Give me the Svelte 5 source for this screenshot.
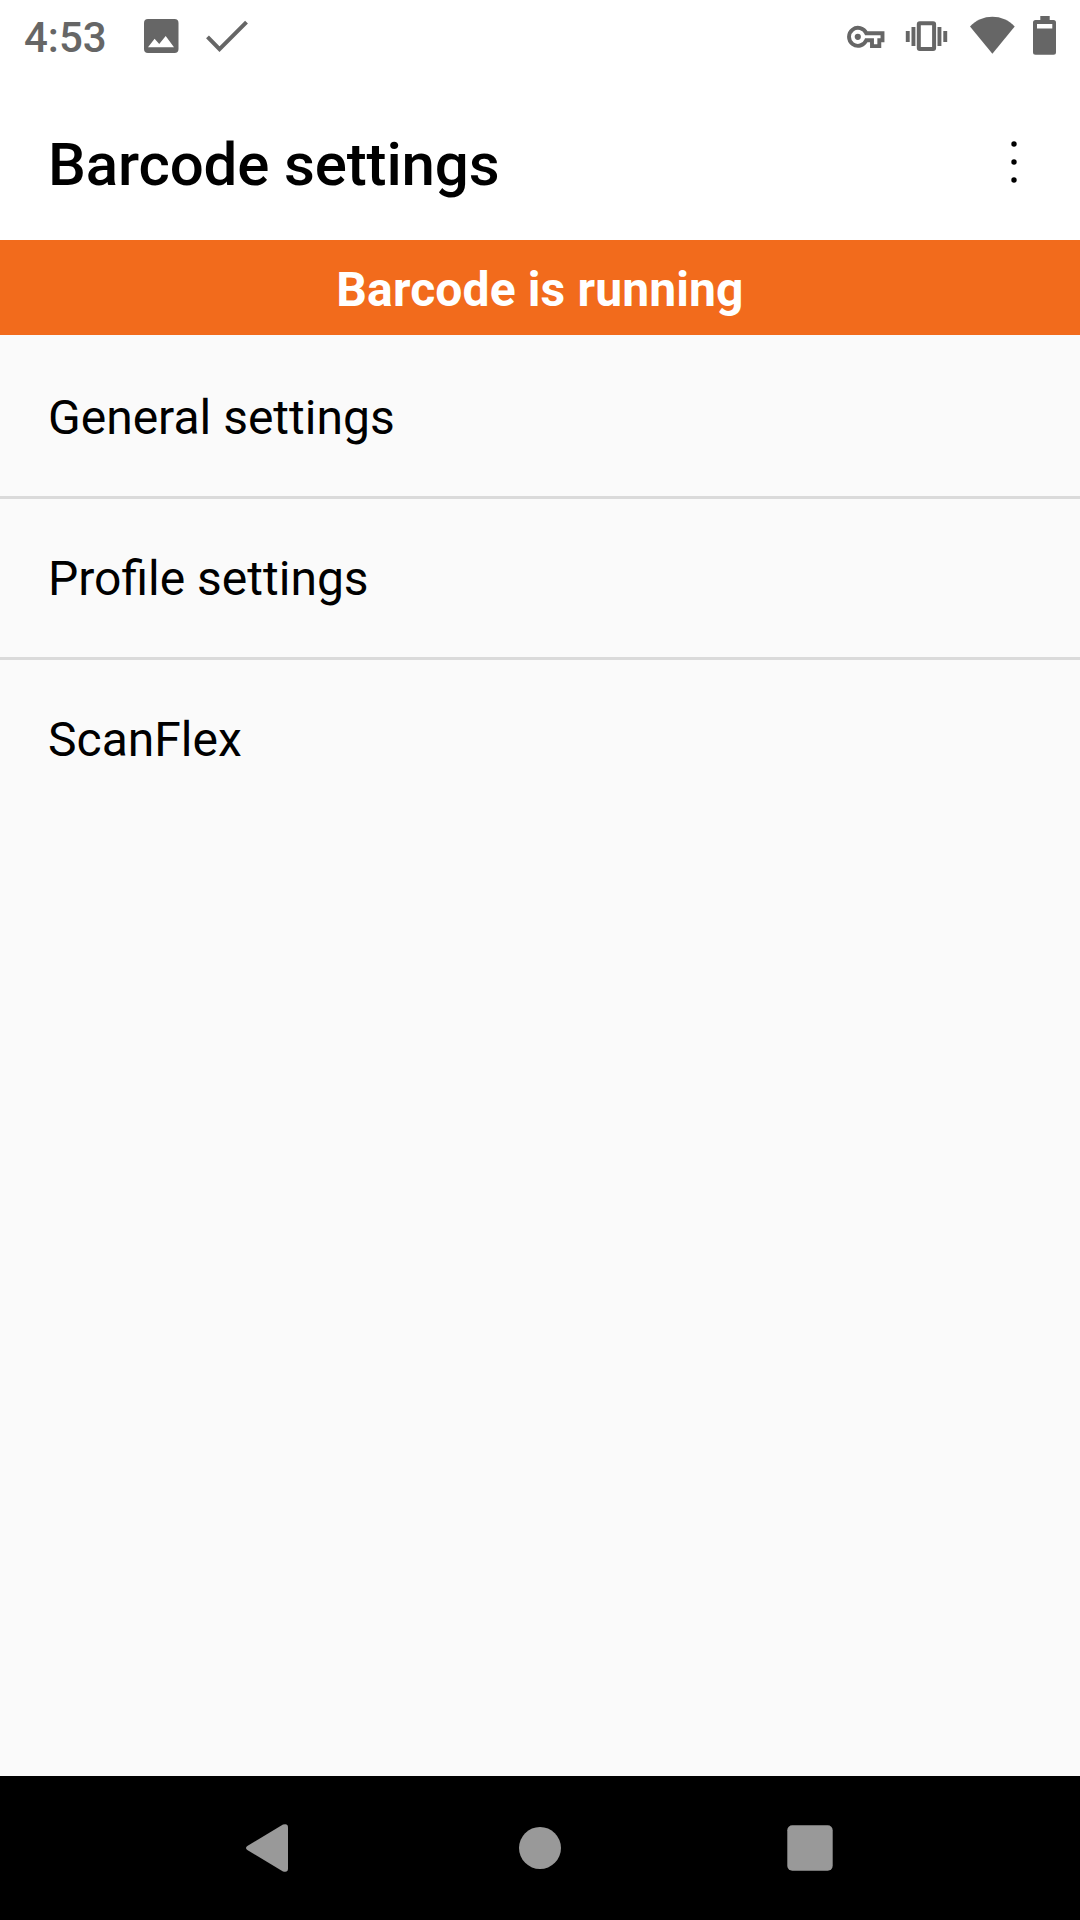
<!-- App.svelte -->
<script lang="ts">
  const title = 'Barcode settings';
  const clock = '4:53';
  const running = true;

  const items = [
    { id: 'general', label: 'General settings' },
    { id: 'profile', label: 'Profile settings' },
    { id: 'scanflex', label: 'ScanFlex' }
  ];
</script>

<div class="screen">
  <div class="status-bar">
    <span class="clock">{clock}</span>

    <svg class="picture" width="36" height="40" viewBox="0 0 36 40" fill="#666">
      <path
        fill-rule="evenodd"
        d="M4 3h26.500a4 4 0 0 1 4 4v26a4 4 0 0 1-4 4H4a4 4 0 0 1-4-4V7a4 4 0 0 1 4-4zM4 31.200h26L21.700 19.900l-6.500 8-4.600-5.200z"
      />
    </svg>
    <svg class="check" width="43" height="40" viewBox="0 0 43 40" fill="none" stroke="#666" stroke-width="4">
      <path d="M1.500 20.800L13.500 33.200L40.500 6.200" />
    </svg>

    <div class="system-icons">
      <!-- VPN key -->
      <svg width="39" height="40" viewBox="0 0 39 40" fill="none" stroke="#666" stroke-width="3.900">
        <path d="M20.300 17.300H36.500V24.300H33.300V30.100H26V24.300H20.300A9 9 0 1 1 20.300 17.300z" />
        <circle cx="11.800" cy="20.800" r="3.100" fill="#666" stroke="none" />
      </svg>
      <!-- Vibrate -->
      <svg class="vibrate" width="43" height="40" viewBox="0 0 43 40" fill="#666">
        <path d="M.8 15h3.900v11H.8zM6.500 11h3.900v19H6.500zM32.500 11h3.900v19h-3.900zM38.300 15h3.900v11h-3.900z" />
        <rect x="13.800" y="7.200" width="15.300" height="25.900" rx="1" fill="none" stroke="#666" stroke-width="4" />
      </svg>
      <!-- Wi-Fi -->
      <svg class="wifi" width="45" height="40" viewBox="0 0 45 40" fill="#666">
        <path d="M0 10.400C6 4 14 .7 22.400 .7S38.700 4 44.700 10.400L22.400 37.800z" />
      </svg>
      <!-- Battery -->
      <svg class="battery" width="24" height="40" viewBox="0 0 24 40" fill="#666">
        <path
          fill-rule="evenodd"
          d="M7.300 0h9.400v4H20.500a2.500 2.500 0 0 1 2.500 2.500V36.200a2.500 2.500 0 0 1-2.500 2.500H2.500a2.500 2.500 0 0 1-2.500-2.500V6.500A2.500 2.500 0 0 1 2.500 4H7.300zM4 8v4.600h15.300V8z"
        />
      </svg>
    </div>
  </div>

  <header class="app-bar">
    <h1>{title}</h1>
    <button class="overflow" aria-label="More options">
      <svg width="12" height="44" viewBox="0 0 12 44">
        <circle cx="6" cy="4" r="2.700" />
        <circle cx="6" cy="22" r="2.700" />
        <circle cx="6" cy="40" r="2.700" />
      </svg>
    </button>
  </header>

  {#if running}
    <div class="banner">Barcode is running</div>
  {/if}

  <ul class="settings">
    {#each items as item (item.id)}
      <li>{item.label}</li>
    {/each}
  </ul>

  <nav class="nav-bar">
    <svg class="back" width="42" height="48" viewBox="0 0 42 48">
      <path d="M1.300 21.900L37 .6Q42-1 42 3.500V44.500Q42 49 37 47.400L1.300 26.100Q-1.300 24 1.300 21.900z" />
    </svg>
    <svg class="home" width="42" height="42" viewBox="0 0 42 42">
      <circle cx="21" cy="21" r="21" />
    </svg>
    <svg class="recents" width="46" height="46" viewBox="0 0 46 46">
      <rect x=".3" y=".3" width="45.400" height="45.400" rx="5" />
    </svg>
  </nav>
</div>

<style>
  :global(body) {
    margin: 0;
  }

  .screen {
    display: flex;
    flex-direction: column;
    width: 1080px;
    height: 1920px;
    background-color: #fafafa;
    color: #000;
    font-family: Roboto, sans-serif;
    overflow: hidden;
  }

  svg {
    display: block;
    flex: none;
  }

  /* Status bar */
  .status-bar {
    display: flex;
    align-items: center;
    box-sizing: border-box;
    height: 72px;
    padding: 0 23px 0 24px;
    background-color: #fff;
  }

  .clock {
    width: 120px;
    padding-top: 3px;
    color: #666;
    font-size: 42px;
    font-weight: 500;
    line-height: 48px;
  }

  .check {
    margin-left: 26px;
  }

  .system-icons {
    display: flex;
    margin-left: auto;
  }

  .vibrate {
    margin-left: 20px;
  }

  .wifi {
    margin-left: 22px;
  }

  .battery {
    margin-left: 18px;
  }

  /* App bar */
  .app-bar {
    display: flex;
    align-items: center;
    justify-content: space-between;
    box-sizing: border-box;
    height: 168px;
    padding: 12px 60px 0 48px;
    background-color: #fff;
  }

  h1 {
    margin: 0;
    padding-top: 5px;
    font-size: 60px;
    font-weight: 500;
    letter-spacing: -0.14px;
    line-height: 70px;
  }

  .overflow {
    padding: 0;
    border: none;
    background: none;
  }

  .banner {
    box-sizing: border-box;
    height: 95px;
    padding-top: 4px;
    background-color: #f26b1c;
    color: #fff;
    font-size: 48px;
    font-weight: 700;
    letter-spacing: 0.13px;
    line-height: 91px;
    text-align: center;
  }

  /* Settings list */
  .settings {
    flex: 1;
    margin: 0;
    padding: 3px 0 0;
    list-style: none;
  }

  .settings li {
    box-sizing: border-box;
    height: 161px;
    padding-left: 48px;
    border-bottom: 3px solid #dadada;
    font-size: 48px;
    /* keeps the fi ligature, which letter-spacing would break */
    font-variant-ligatures: common-ligatures;
    line-height: 160px;
  }

  .settings li:last-child {
    border-bottom: none;
  }

  /* Navigation bar */
  .nav-bar {
    display: flex;
    align-items: center;
    box-sizing: border-box;
    height: 144px;
    padding-left: 246px;
    background-color: #000;
    fill: #999;
  }

  .home {
    margin-left: 231px;
  }

  .recents {
    margin-left: 226px;
  }
</style>
